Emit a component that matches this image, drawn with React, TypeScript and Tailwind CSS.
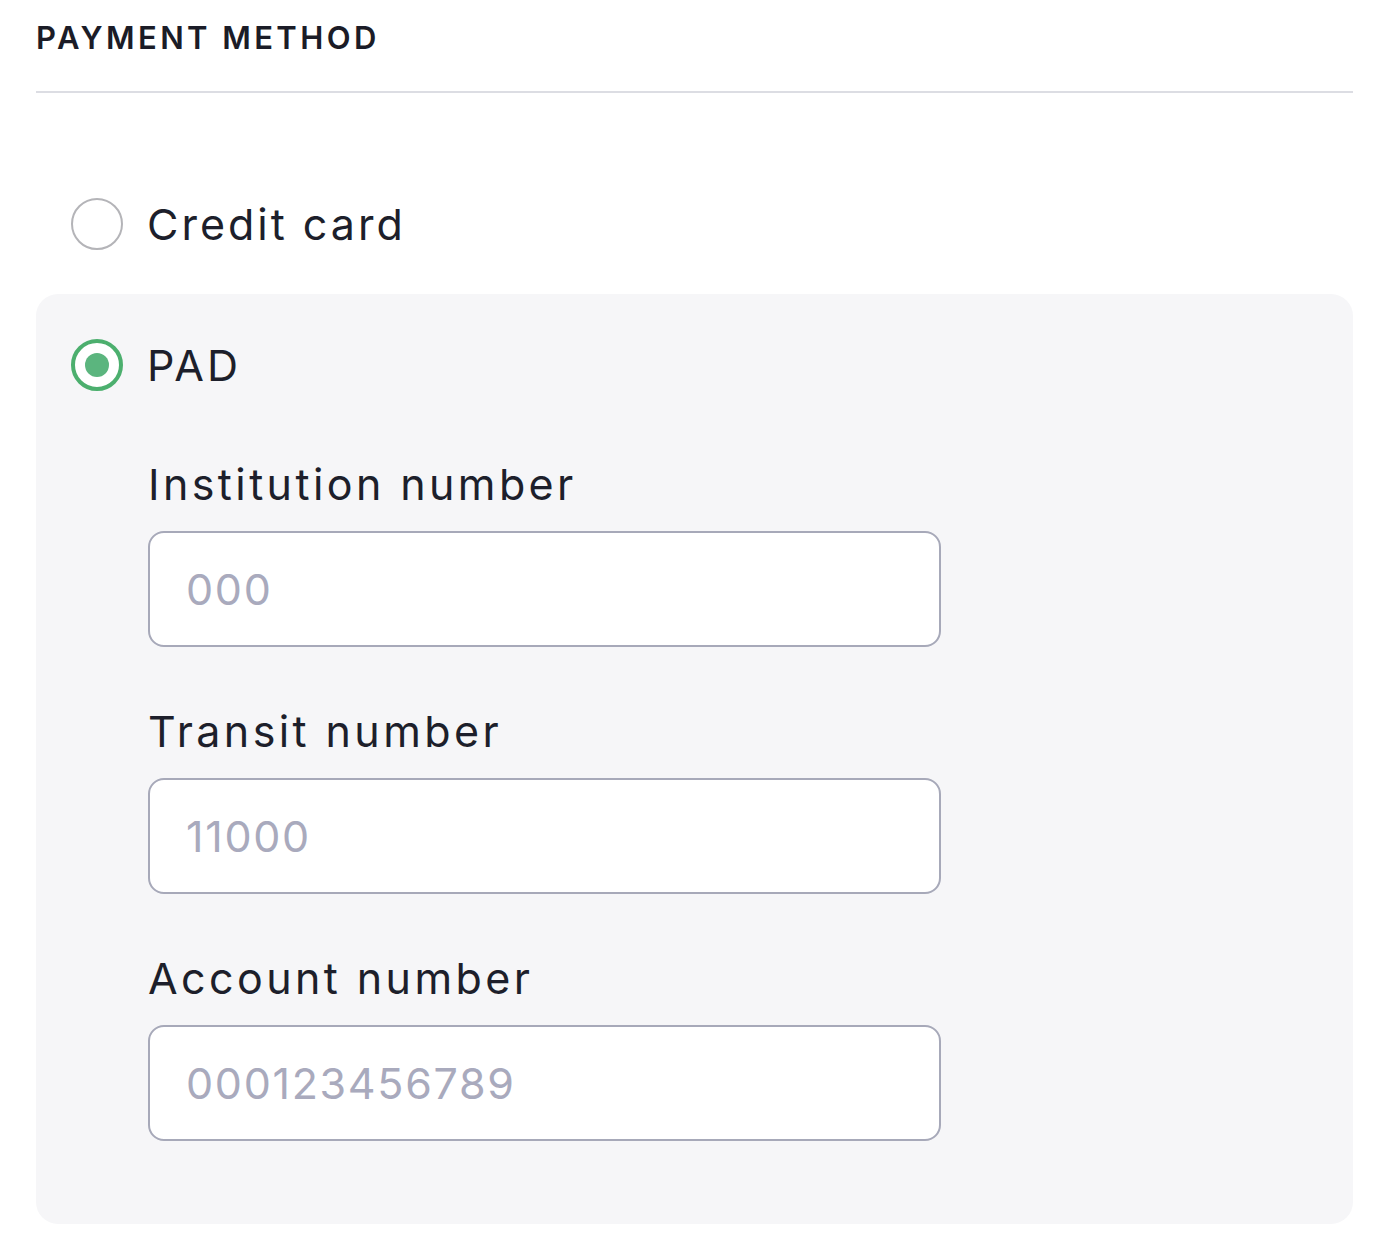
import React, { useState } from "react";

interface FieldProps {
  label: string;
  placeholder: string;
  first?: boolean;
}

const Field = ({ label, placeholder, first }: FieldProps) => (
  <div className={first ? "mt-[51px]" : "mt-[60px]"}>
    <label className="block text-[43px] leading-[48px] text-[#1d1f2b] tracking-[3.4px]">
      {label}
    </label>
    <input
      type="text"
      placeholder={placeholder}
      className="mt-[23px] block w-[793px] h-[116px] rounded-[16px] border-2 border-[#a7a9b9] bg-white pl-[36px] text-[43px] tracking-[1.7px] text-[#1d1f2b] placeholder:text-[#a9aabd] outline-none"
    />
  </div>
);

const Radio = ({ checked }: { checked: boolean }) =>
  checked ? (
    <span className="flex h-[52px] w-[52px] shrink-0 items-center justify-center rounded-full border-[4px] border-[#4caf6e] bg-white">
      <span className="h-[24px] w-[24px] rounded-full bg-[#5bb57e]" />
    </span>
  ) : (
    <span className="h-[52px] w-[52px] shrink-0 rounded-full border-2 border-[#b4b4b8] bg-white" />
  );

const App = () => {
  const [method, setMethod] = useState<"card" | "pad">("pad");

  return (
    <div
      className="min-h-[1248px] bg-white pl-[36px] pr-[39px]"
      style={{ fontFamily: "Inter, 'Noto Sans', sans-serif" }}
    >
      <div className="h-[93px] border-b-2 border-[#dcdde3] pt-[18px]">
        <h2 className="text-[31px] leading-[40px] font-semibold tracking-[3.4px] text-[#1b1c27]">
          PAYMENT METHOD
        </h2>
      </div>

      <button
        type="button"
        onClick={() => setMethod("card")}
        className="mt-[87px] flex h-[88px] items-center gap-[24px] pl-[35px]"
      >
        <Radio checked={method === "card"} />
        <span className="text-[43px] text-[#1d1f2b] tracking-[3px]">Credit card</span>
      </button>

      <div className="mt-[26px] rounded-[22px] bg-[#f6f6f8] pl-[35px] pt-[27px] pb-[83px]">
        <button
          type="button"
          onClick={() => setMethod("pad")}
          className="flex h-[88px] items-center gap-[24px]"
        >
          <Radio checked={method === "pad"} />
          <span className="text-[43px] text-[#1d1f2b] tracking-[3px]">PAD</span>
        </button>

        <div className="pl-[77px]">
          <Field first label="Institution number" placeholder="000" />
          <Field label="Transit number" placeholder="11000" />
          <Field label="Account number" placeholder="000123456789" />
        </div>
      </div>
    </div>
  );
};

export default App;
